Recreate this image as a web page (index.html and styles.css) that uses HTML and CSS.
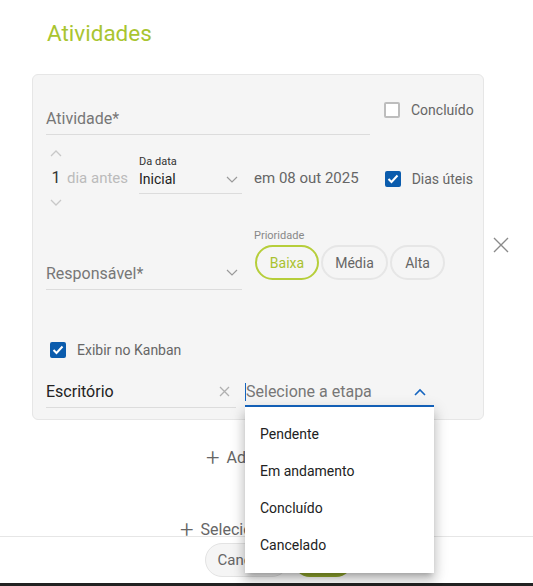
FILE: index.html
```html
<!DOCTYPE html>
<html lang="pt">
<head>
<meta charset="utf-8">
<title>Atividades</title>
<link rel="stylesheet" href="styles.css">
</head>
<body>
<div class="page">
  <div class="content">
    <h1 class="title">Atividades</h1>
    <div class="card-row">
      <div class="card">
        <div class="row row1">
          <div class="field field-activity"><span class="placeholder big">Atividade*</span></div>
          <label class="check check-concl"><span class="box"></span><span class="check-label">Concluído</span></label>
        </div>
        <div class="row row2">
          <div class="spinner">
            <svg class="spin-arrow" width="12" height="8" viewBox="0 0 12 8"><polyline points="1,7 6,2 11,7" fill="none" stroke="#c8c8c8" stroke-width="1.3"/></svg>
            <span class="spin-value">1</span>
            <svg class="spin-arrow" width="12" height="8" viewBox="0 0 12 8"><polyline points="1,1 6,6 11,1" fill="none" stroke="#c8c8c8" stroke-width="1.3"/></svg>
          </div>
          <span class="days-label">dia antes</span>
          <div class="select-date">
            <span class="small-label">Da data</span>
            <div class="select-line">
              <span class="value">Inicial</span>
              <svg width="12" height="8" viewBox="0 0 12 8"><polyline points="1,1 6,6 11,1" fill="none" stroke="#9a9a9a" stroke-width="1.2"/></svg>
            </div>
          </div>
          <span class="date-text">em 08 out 2025</span>
          <label class="check check-dias"><span class="box checked"><svg width="12" height="10" viewBox="0 0 12 10"><polyline points="1.5,5 4.5,8 10.5,1.5" fill="none" stroke="#fff" stroke-width="2"/></svg></span><span class="check-label">Dias úteis</span></label>
        </div>
        <div class="row row3">
          <div class="field field-resp"><span class="placeholder big">Responsável*</span>
            <svg width="12" height="8" viewBox="0 0 12 8"><polyline points="1,1 6,6 11,1" fill="none" stroke="#9a9a9a" stroke-width="1.2"/></svg>
          </div>
          <div class="priority">
            <span class="small-label muted">Prioridade</span>
            <div class="pills">
              <span class="pill pill-active pill-baixa">Baixa</span>
              <span class="pill pill-media">Média</span>
              <span class="pill pill-alta">Alta</span>
            </div>
          </div>
        </div>
        <div class="row row4">
          <label class="check check-kanban"><span class="box checked"><svg width="12" height="10" viewBox="0 0 12 10"><polyline points="1.5,5 4.5,8 10.5,1.5" fill="none" stroke="#fff" stroke-width="2"/></svg></span><span class="check-label">Exibir no Kanban</span></label>
        </div>
        <div class="row row5">
          <div class="field field-office"><span class="value big">Escritório</span>
            <svg width="11" height="11" viewBox="0 0 11 11"><path d="M1 1L10 10M10 1L1 10" stroke="#b0b0b0" stroke-width="1.3"/></svg>
          </div>
          <div class="field field-stage"><span class="caret"></span><span class="placeholder big">Selecione a etapa</span>
            <svg width="12" height="8" viewBox="0 0 12 8"><polyline points="1,7 6,2 11,7" fill="none" stroke="#1565c0" stroke-width="1.6"/></svg>
          </div>
        </div>
      </div>
      <button class="close-btn" aria-label="Fechar"><svg width="16" height="16" viewBox="0 0 16 16"><path d="M1 1L15 15M15 1L1 15" stroke="#8a8a8a" stroke-width="1.4"/></svg></button>
    </div>
    <div class="add add-activity"><span class="plus">+</span>Adicionar atividade</div>
    <div class="add add-model"><span class="plus">+</span>Selecionar modelo</div>
  </div>
  <div class="footer">
    <button class="btn btn-cancel">Cancelar</button>
    <button class="btn btn-save">Salvar</button>
  </div>
  <div class="bottom-bar"></div>

  <ul class="dropdown">
    <li>Pendente</li>
    <li>Em andamento</li>
    <li>Concluído</li>
    <li>Cancelado</li>
  </ul>
</div>
</body>
</html>
```
FILE: styles.css
```css
* { box-sizing: border-box; }
html, body { margin: 0; padding: 0; background: #fff; }
body { font-family: Roboto, "Liberation Sans", Arial, sans-serif; color: #222; }

.page { position: relative; width: 533px; height: 586px; overflow: hidden; }

.content { height: 536px; overflow: hidden; }

.title {
  margin: 0;
  padding: 20px 0 0 47px;
  height: 74px;
  font-size: 22.5px;
  line-height: 26px;
  font-weight: 400;
  color: #a9c530;
}

.card-row { display: flex; align-items: flex-start; }

.card {
  margin-left: 32px;
  width: 452px;
  height: 346px;
  background: #f5f5f5;
  border: 1px solid #e6e6e6;
  border-radius: 6px;
  padding: 0 0 0 13px;
}

.row { display: flex; }

.field {
  display: flex;
  align-items: center;
  justify-content: space-between;
  border-bottom: 1px solid #dcdcdc;
  height: 36px;
  padding-top: 3px;
  padding-right: 4px;
}

.big { font-size: 16px; }
.placeholder { color: #777; }
.value { color: #222; }

/* row 1 */
.row1 { margin-top: 24px; align-items: flex-start; }
.field-activity { width: 324px; }
.check { display: flex; align-items: center; cursor: pointer; }
.check-concl { margin-left: 14px; margin-top: 3px; }
.box {
  width: 16px; height: 16px;
  border: 2px solid #bdbdbd;
  border-radius: 2px;
  background: #fff;
  display: flex; align-items: center; justify-content: center;
}
.box.checked { background: #0b5cad; border-color: #0b5cad; }
.check-label { margin-left: 11px; font-size: 14px; color: #666; }

/* row 2 */
.row2 { margin-top: 10px; height: 65px; align-items: center; }
.spinner {
  display: flex; flex-direction: column; align-items: center;
  width: 12px; margin-left: 4px;
}
.spin-arrow { display: block; }
.spin-value { font-size: 16px; line-height: 16px; color: #333; margin: 13px 0 13px; }
.days-label { font-size: 15px; color: #bbb; margin-left: 5px; }
.select-date { margin-left: 11px; width: 103px; align-self: flex-start; margin-top: 10px; }
.small-label { display: block; font-size: 11px; color: #333; line-height: 14px; }
.small-label.muted { color: #888; }
.select-line {
  display: flex; align-items: flex-start; justify-content: space-between;
  border-bottom: 1px solid #dcdcdc;
  height: 25px; padding-right: 4px;
}
.select-line .value { font-size: 14px; line-height: 20px; }
.select-line svg { margin-top: 7px; }
.date-text { margin-left: 12px; font-size: 15px; color: #666; }
.check-dias { margin-left: 26px; margin-top: 2px; }

/* row 3 */
.row3 { margin-top: 18px; align-items: flex-start; }
.field-resp { width: 196px; margin-top: 26px; height: 36px; }
.priority { margin-left: 12px; }
.priority .small-label { line-height: 16px; }
.pills { display: flex; gap: 2px; margin-top: 1px; }
.pill {
  height: 35px;
  border: 2px solid #e6e6e6;
  border-radius: 18px;
  display: flex; align-items: center; justify-content: center;
  font-size: 14px; color: #666;
  background: #f5f5f5;
}
.pill-baixa { width: 64px; margin-left: 1px; }
.pill-media { width: 67px; }
.pill-alta { width: 55px; }
.pill-active { border-color: #b6ce3a; color: #a9c22e; }

/* row 4 */
.row4 { margin-top: 52px; }
.check-kanban { margin-left: 4px; }

/* row 5 */
.row5 { margin-top: 15px; align-items: flex-start; }
.field-office { width: 190px; height: 35px; padding-right: 6px; }
.field-stage {
  width: 189px; height: 34px; margin-left: 9px;
  border-bottom: 2px solid #1565c0;
  justify-content: flex-start;
  padding-right: 8px;
  padding-top: 5px;
}
.field-stage svg { margin-left: auto; }
.caret { width: 1px; height: 18px; background: #1565c0; }

.close-btn {
  margin: 163px 0 0 9px;
  padding: 0;
  border: 0;
  background: transparent;
  width: 16px; height: 16px;
}
.close-btn svg { display: block; }

.add {
  font-size: 16px; color: #666; line-height: 20px;
  display: flex; align-items: center;
}
.plus { font-size: 24px; font-weight: 300; color: #666; margin-right: 7px; line-height: 20px; }
.add-activity { margin-top: 28px; padding-left: 206px; }
.add-model { margin-top: 52px; padding-left: 180px; }

.footer {
  height: 47px;
  border-top: 1px solid #e6e6e6;
  display: flex;
  padding: 6px 0 0 205px;
  gap: 4px;
}
.btn {
  height: 34px;
  border-radius: 17px;
  font-family: inherit;
  font-size: 15px;
  padding: 0;
}
.btn-cancel { width: 84px; background: #f5f5f5; border: 1px solid #e3e3e3; color: #666; }
.btn-save { width: 60px; background: #94ab2e; border: 0; color: #fff; }

.bottom-bar { height: 3px; background: #222; }

.dropdown {
  position: absolute;
  left: 245px; top: 407px;
  width: 189px;
  margin: 0;
  padding: 9px 0 9px;
  list-style: none;
  background: #fff;
  box-shadow: 0 5px 5px -3px rgba(0,0,0,.2), 0 8px 10px 1px rgba(0,0,0,.14), 0 3px 14px 2px rgba(0,0,0,.12);
}
.dropdown li {
  height: 37px;
  line-height: 37px;
  padding-left: 15px;
  font-size: 14px;
  color: #222;
}
```
